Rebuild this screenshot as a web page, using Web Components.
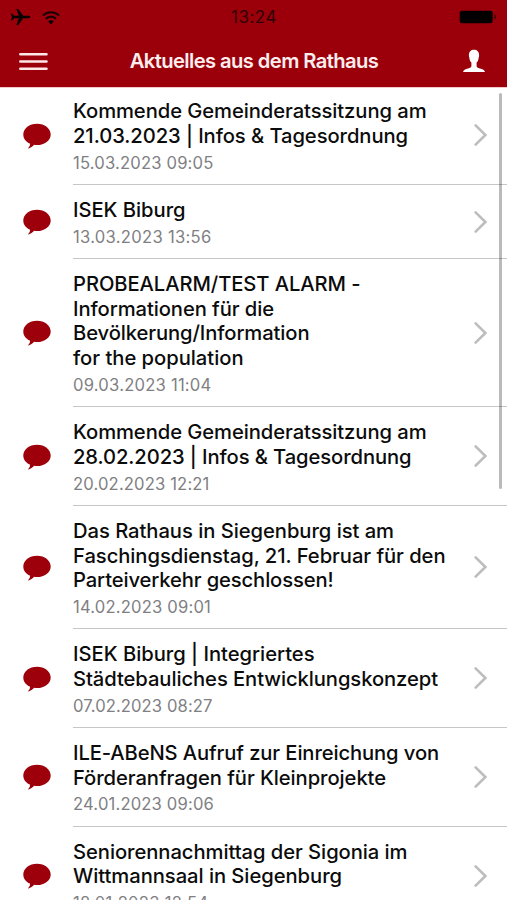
<!DOCTYPE html>
<html lang="de">
<head>
<meta charset="utf-8">
<title>Aktuelles aus dem Rathaus</title>
<style>
body{margin:0;background:#fff;font-family:Inter,"Liberation Sans",sans-serif;color:#0b0b0b;overflow:hidden}
</style>
</head>
<body>
<news-app></news-app>
<script>
// One line of text, tracked so that it fills the given width.
class FitLine extends HTMLElement{
  connectedCallback(){
    this.attachShadow({mode:'open'}).innerHTML='<style>:host{display:block;white-space:nowrap}span{display:inline-block}</style><span><slot></slot></span>';
  }
  fit(){
    const s=this.shadowRoot.querySelector('span');
    s.style.letterSpacing='0';
    const gap=(Number(this.getAttribute('width'))-s.getBoundingClientRect().width)/this.dataset.count;
    s.style.letterSpacing=gap.toFixed(3)+'px';
  }
}
customElements.define('fit-line',FitLine);

class StatusBar extends HTMLElement{
  connectedCallback(){
    this.attachShadow({mode:'open'}).innerHTML=`<style>
    :host{display:grid;grid-template-columns:1fr auto 1fr;align-items:center;height:34px;padding:0 9px 0 10px}
    .l{display:flex;align-items:center;gap:11px}
    fit-line{font-size:17px;line-height:34px;color:#300004}
    .b{justify-self:end}
    svg{display:block}</style>
    <div class="l">
    <svg width="21" height="18" viewBox="0 0 21 18"><path fill="#090000" d="M20.3 9c0-.9-1.200-1.300-2.400-1.300h-4.600L8.200 1H6.300l2.600 6.700H4.200L2 5.400H.8L2 9 .8 12.600H2l2.200-2.300h4.700L6.300 17h1.900l5.100-6.700h4.600c1.200 0 2.400-.4 2.400-1.300z"/></svg>
    <svg width="18" height="15" viewBox="0 0 18 15" fill="none" stroke="#180002" stroke-width="2"><path d="M.9 5.600a11.600 11.600 0 0 1 16.200 0M3.900 8.800a7.300 7.300 0 0 1 10.200 0"/><path fill="#090000" stroke="none" d="M6.200 11.500a4 4 0 0 1 5.600 0L9 14.600z"/></svg>
    </div><fit-line width="46" data-count="5">13:24</fit-line>
    <svg class="b" width="39" height="14" viewBox="0 0 39 14"><rect x=".7" y=".7" width="33" height="12.600" rx="2.500" fill="#050000"/><path d="M35.600 4.300q2.600 2.700 0 5.400z" fill="#180000"/></svg>`;
    this.shadowRoot.querySelector('fit-line').fit();
  }
}
customElements.define('status-bar',StatusBar);

class NavBar extends HTMLElement{
  connectedCallback(){
    this.attachShadow({mode:'open'}).innerHTML=`<style>
    :host{display:grid;grid-template-columns:101px 1fr 100px;align-items:center;height:53px;color:#fff}
    svg{display:block}.m{margin:2px 0 0 19px}.t{justify-self:center;font-size:20.200px;font-weight:600;line-height:53px;color:#fdeeee}.u{margin-left:55px}</style>
    <svg class="m" width="29" height="19" viewBox="0 0 29 19" stroke="#fde8e8" stroke-width="2.500" stroke-linecap="round"><path d="M1.300 2.300h26.200M1.300 9.500h26.200M1.300 16.700h26.200"/></svg>
    <div class="t"><fit-line width="248.500" data-count="${this.textContent.length}"><slot></slot></fit-line></div>
    <svg class="u" width="24" height="24" viewBox="0 0 24 24"><path fill="#fff" d="M12 .8C8.900.8 6.900 2.800 6.900 6.200c0 1.100.1 1.700.4 2.300.2 2.300.9 4 2.100 5.100v3.300c0 1.400-1.300 1.900-3.300 2.500C3.300 20.200 1.400 20.900 1 22.900h22c-.4-2-2.300-2.700-5.100-3.500-2-.6-3.300-1.100-3.300-2.500v-3.300c1.200-1.100 1.900-2.800 2.100-5.100.3-.6.4-1.200.4-2.300C17.100 2.800 15.100.8 12 .8z"/></svg>`;
    this.shadowRoot.querySelector('fit-line').fit();
  }
}
customElements.define('nav-bar',NavBar);

class NewsItem extends HTMLElement{
  connectedCallback(){
    this.attachShadow({mode:'open'}).innerHTML=`<style>
    :host{display:grid;grid-template-columns:73px 1fr;align-items:stretch;box-sizing:border-box}
    svg{display:block;align-self:center}
    .bubble{margin:1px 0 0 23px}
    .body{display:grid;grid-template-columns:1fr 34px;border-bottom:1px solid #c6c6c8}
    .text{padding-top:12.900px;min-width:0}
    .title{font-size:20.200px;line-height:24.650px;font-weight:450}
    .date{font-size:16.600px;line-height:20.200px;margin-top:4.100px;color:#808083}
    </style>
    <svg class="bubble" width="28" height="27" viewBox="0 0 28 27"><path fill="#9e000b" d="M14 .8C21.600.8 27.700 5.500 27.700 11.400S21.600 22 14 22c-1 0-2-.1-2.900-.2-1.500 1.800-3.500 3.200-5.500 3.600-.5.1-.6-.4-.2-.7 1.300-1 1.800-2.500 1.500-4.100C2.900 18.900.3 15.500.3 11.400.3 5.500 6.400.8 14 .8z"/></svg>
    <div class="body"><div class="text"><div class="title"><slot></slot></div><div class="date"><slot name="date"></slot></div></div>
    <svg width="15" height="24" viewBox="0 0 15 24" fill="none" stroke="#bdbdbf" stroke-width="2.600" stroke-linecap="round"><path d="M2.600 2.300 12.400 12l-9.800 9.700"/></svg></div>`;
  }
}
customElements.define('news-item',NewsItem);

class NewsApp extends HTMLElement{
  connectedCallback(){
    const items=[
      [[['Kommende Gemeinderatssitzung am',353.500],['21.03.2023 | Infos & Tagesordnung',335]],['15.03.2023 09:05',140.500]],
      [[['ISEK Biburg',112.500]],['13.03.2023 13:56',138.500]],
      [[['PROBEALARM/TEST ALARM -',287.500],['Informationen für die',201],['Bevölkerung/Information',236.500],['for the population',170.500]],['09.03.2023 11:04',138.500]],
      [[['Kommende Gemeinderatssitzung am',353.500],['28.02.2023 | Infos & Tagesordnung',338.500]],['20.02.2023 12:21',136.500]],
      [[['Das Rathaus in Siegenburg ist am',321],['Faschingsdienstag, 21. Februar für den',372.500],['Parteiverkehr geschlossen!',260.500]],['14.02.2023 09:01',138]],
      [[['ISEK Biburg | Integriertes',241.500],['Städtebauliches Entwicklungskonzept',365]],['07.02.2023 08:27',139.500]],
      [[['ILE-ABeNS Aufruf zur Einreichung von',366],['Förderanfragen für Kleinprojekte',313]],['24.01.2023 09:06',141]],
      [[['Seniorennachmittag der Sigonia im',334.500],['Wittmannsaal in Siegenburg',269]],['18.01.2023 12:54',135.500]]
    ];
    const line=([t,w],a='')=>`<fit-line ${a} width="${w}" data-count="${t.length}">${t.replace('&','&amp;')}</fit-line>`;
    this.attachShadow({mode:'open'}).innerHTML=`<style>
    :host{display:flex;flex-direction:column;position:relative;width:507px;height:900px;overflow:hidden;background:#fff}
    header{flex:none;height:87px;background:#9b000a;box-shadow:0 1px 0 #f3caca;z-index:1}
    main{flex:1;min-height:0;display:flex;flex-direction:column;margin-top:-.5px}
    news-item{flex:none}
    .scroll{position:absolute;right:5px;top:93px;width:3.500px;height:396px;border-radius:2px;background:rgba(0,0,0,.27)}
    </style><header><status-bar></status-bar><nav-bar>Aktuelles aus dem Rathaus</nav-bar></header>
    <main>${items.map(([ls,d])=>`<news-item style="height:${(74+24.700*(ls.length-1)).toFixed(2)}px">${ls.map(l=>line(l)).join('')}${line(d,'slot="date"')}</news-item>`).join('')}</main><div class="scroll"></div>`;
    this.shadowRoot.querySelectorAll('news-item fit-line').forEach(f=>f.fit());
  }
}
customElements.define('news-app',NewsApp);
</script>
</body>
</html>
